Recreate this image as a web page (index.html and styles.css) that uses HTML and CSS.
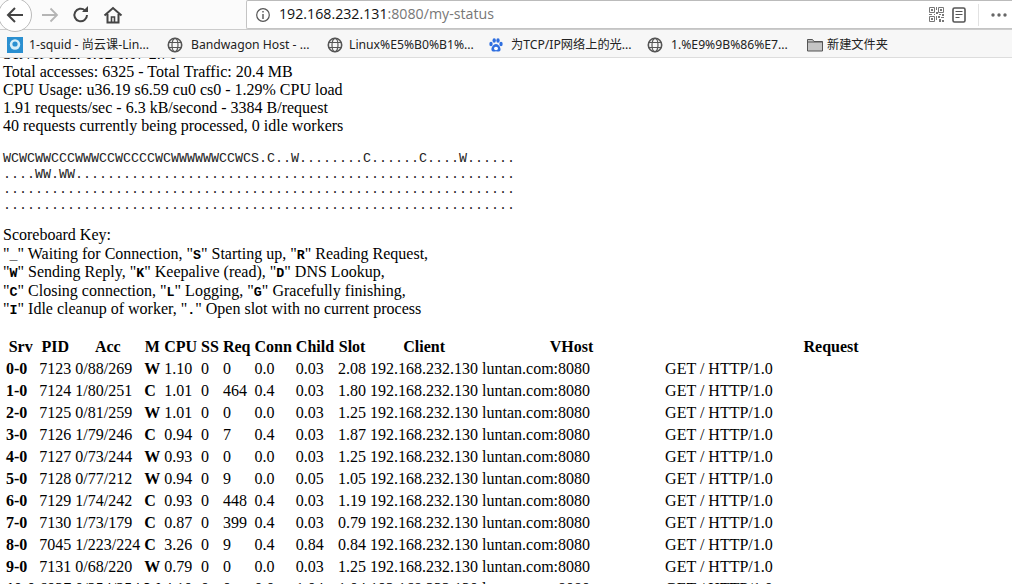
FILE: index.html
```html
<!DOCTYPE html>
<html lang="en">
<head>
<meta charset="utf-8">
<title>Apache Status</title>
<link rel="stylesheet" href="styles.css">
</head>
<body>
<header class="toolbar">
  <div class="nav">
    <span class="back"><svg width="24" height="24" viewBox="0 0 24 24"><path d="M20 12H6M12 5l-7 7 7 7" fill="none" stroke="#444" stroke-width="2"/></svg></span>
    <svg class="fwd" width="20" height="20" viewBox="0 0 20 20"><path d="M2 10h15M10.500 3.500l6.500 6.500-6.500 6.500" fill="none" stroke="#b5b5b5" stroke-width="1.800"/></svg>
    <svg class="reload" width="20" height="20" viewBox="0 0 20 20"><path d="M16 10a6.300 6.300 0 1 1-2-4.600" fill="none" stroke="#444" stroke-width="2"/><path d="M11 7h6V1z" fill="#444"/></svg>
    <svg class="home" width="20" height="20" viewBox="0 0 20 20"><path d="M1.500 10.500L10 3l8.500 7.500M4.500 9v8.500h11V9" fill="none" stroke="#444" stroke-width="2"/><path d="M8.500 17v-5h3v5" fill="none" stroke="#444" stroke-width="1.600"/></svg>
  </div>
  <div class="urlbar">
    <svg class="info" width="16" height="16" viewBox="0 0 16 16"><circle cx="8" cy="8" r="6.300" fill="none" stroke="#555" stroke-width="1.200"/><path d="M8 7v5M8 4v1.600" stroke="#555" stroke-width="1.400"/></svg>
    <span class="url"><span class="host">192.168.232.131</span>:8080/my-status</span>
    <svg class="qr" width="15" height="15" viewBox="0 0 15 15"><path d="M0.500 0.500h5v5h-5zM9.500 0.500h5v5h-5zM0.500 9.500h5v5h-5z" fill="none" stroke="#777"/><path d="M2 2h2v2H2zM11 2h2v2h-2zM2 11h2v2H2zM7 0h1v3H7zM7 5h2v2H7zM0 7h3v1H0zM5 7h1v1H5zM10 7h2v1h-2zM13 7h2v2h-2zM9 9h2v2H9zM12 10h3v1h-3zM7 9h1v4H7zM10 12h2v3h-2zM13 13h2v2h-2z" fill="#777"/></svg>
    <svg class="doc" width="14" height="16" viewBox="0 0 14 16"><rect x="1" y="1" width="12" height="14" rx="1.500" fill="none" stroke="#555" stroke-width="1.600"/><path d="M3.500 4.500h7M3.500 7.500h7M3.500 10.500h4" stroke="#555"/></svg>
    <span class="sep"></span>
    <svg class="more" width="16" height="4" viewBox="0 0 16 4"><circle cx="2" cy="2" r="1.700" fill="#666"/><circle cx="8" cy="2" r="1.700" fill="#666"/><circle cx="14" cy="2" r="1.700" fill="#666"/></svg>
  </div>
</header>
<nav class="bookmarks">
  <span class="bm bm-squid"><svg width="16" height="16" viewBox="0 0 16 16"><rect width="16" height="16" fill="#2a8fd0"/><circle cx="8" cy="7.500" r="5.200" fill="#d8eef8"/><circle cx="8" cy="7" r="2.600" fill="#2a8fd0"/></svg>1-squid - 尚云课-Lin...</span>
  <span class="bm bm-band"><svg class="globe" width="16" height="16" viewBox="0 0 16 16"><circle cx="8" cy="8" r="6.700" fill="none" stroke="#555" stroke-width="1.600"/><ellipse cx="8" cy="8" rx="3" ry="6.700" fill="none" stroke="#555" stroke-width="1.200"/><path d="M1.500 5.500h13M1.500 10.500h13" stroke="#555" stroke-width="1.200"/></svg>Bandwagon Host - ...</span>
  <span class="bm bm-linux"><svg class="globe" width="16" height="16" viewBox="0 0 16 16"><circle cx="8" cy="8" r="6.700" fill="none" stroke="#555" stroke-width="1.600"/><ellipse cx="8" cy="8" rx="3" ry="6.700" fill="none" stroke="#555" stroke-width="1.200"/><path d="M1.500 5.500h13M1.500 10.500h13" stroke="#555" stroke-width="1.200"/></svg>Linux%E5%B0%B1%...</span>
  <span class="bm bm-tcp"><svg width="16" height="16" viewBox="0 0 16 16"><g fill="#2f6fe0"><ellipse cx="3" cy="7" rx="1.700" ry="2.200"/><ellipse cx="6.200" cy="3.500" rx="1.700" ry="2.300"/><ellipse cx="10" cy="3.500" rx="1.700" ry="2.300"/><ellipse cx="13" cy="7" rx="1.700" ry="2.200"/><path d="M8 7c-2.500 0-5 3.500-4.500 6 .4 2 3 1.500 4.500 1.200 1.500.3 4.100.8 4.500-1.200.5-2.500-2-6-4.500-6z"/></g><ellipse cx="8" cy="11.500" rx="2" ry="1.800" fill="#fff"/></svg>为TCP/IP网络上的光...</span>
  <span class="bm bm-one"><svg class="globe" width="16" height="16" viewBox="0 0 16 16"><circle cx="8" cy="8" r="6.700" fill="none" stroke="#555" stroke-width="1.600"/><ellipse cx="8" cy="8" rx="3" ry="6.700" fill="none" stroke="#555" stroke-width="1.200"/><path d="M1.500 5.500h13M1.500 10.500h13" stroke="#555" stroke-width="1.200"/></svg>1.%E9%9B%86%E7...</span>
  <span class="bm bm-folder"><svg width="16" height="14" viewBox="0 0 16 14"><path d="M.5 13V1.500h5l1.500 2h8.500V13z" fill="#c4c4c4" stroke="#555"/><path d="M.5 4h15" stroke="#555"/></svg>新建文件夹</span>
</nav>
<main class="viewport">
  <div class="page">
    <div class="lines">Server load: 0.02 0.07 2.76</div>
    <div class="lines">Total accesses: 6325 - Total Traffic: 20.4 MB</div>
    <div class="lines">CPU Usage: u36.19 s6.59 cu0 cs0 - 1.29% CPU load</div>
    <div class="lines">1.91 requests/sec - 6.3 kB/second - 3384 B/request</div>
    <div class="lines">40 requests currently being processed, 0 idle workers</div>
    <pre class="score">WCWCWWCCCWWWCCWCCCCWCWWWWWWCCWCS.C..W........C......C....W......
....WW.WW.......................................................
................................................................
................................................................</pre>
    <p class="key">Scoreboard Key:<br>
"<b><code>_</code></b>" Waiting for Connection, "<b><code>S</code></b>" Starting up, "<b><code>R</code></b>" Reading Request,<br>
"<b><code>W</code></b>" Sending Reply, "<b><code>K</code></b>" Keepalive (read), "<b><code>D</code></b>" DNS Lookup,<br>
"<b><code>C</code></b>" Closing connection, "<b><code>L</code></b>" Logging, "<b><code>G</code></b>" Gracefully finishing,<br>
"<b><code>I</code></b>" Idle cleanup of worker, "<b><code>.</code></b>" Open slot with no current process</p>
    <table class="workers">
      <tr><th class="c-srv">Srv</th><th>PID</th><th class="c-acc">Acc</th><th>M</th><th>CPU</th><th class="c-ss">SS</th><th class="c-req">Req</th><th>Conn</th><th>Child</th><th>Slot</th><th>Client</th><th class="c-vhost">VHost</th><th class="c-request">Request</th></tr>
      <tr><td><b>0-0</b></td><td>7123</td><td>0/88/269</td><td><b>W</b></td><td>1.10</td><td>0</td><td>0</td><td>0.0</td><td>0.03</td><td>2.08</td><td>192.168.232.130</td><td>luntan.com:8080</td><td>GET / HTTP/1.0</td></tr>
      <tr><td><b>1-0</b></td><td>7124</td><td>1/80/251</td><td><b>C</b></td><td>1.01</td><td>0</td><td>464</td><td>0.4</td><td>0.03</td><td>1.80</td><td>192.168.232.130</td><td>luntan.com:8080</td><td>GET / HTTP/1.0</td></tr>
      <tr><td><b>2-0</b></td><td>7125</td><td>0/81/259</td><td><b>W</b></td><td>1.01</td><td>0</td><td>0</td><td>0.0</td><td>0.03</td><td>1.25</td><td>192.168.232.130</td><td>luntan.com:8080</td><td>GET / HTTP/1.0</td></tr>
      <tr><td><b>3-0</b></td><td>7126</td><td>1/79/246</td><td><b>C</b></td><td>0.94</td><td>0</td><td>7</td><td>0.4</td><td>0.03</td><td>1.87</td><td>192.168.232.130</td><td>luntan.com:8080</td><td>GET / HTTP/1.0</td></tr>
      <tr><td><b>4-0</b></td><td>7127</td><td>0/73/244</td><td><b>W</b></td><td>0.93</td><td>0</td><td>0</td><td>0.0</td><td>0.03</td><td>1.25</td><td>192.168.232.130</td><td>luntan.com:8080</td><td>GET / HTTP/1.0</td></tr>
      <tr><td><b>5-0</b></td><td>7128</td><td>0/77/212</td><td><b>W</b></td><td>0.94</td><td>0</td><td>9</td><td>0.0</td><td>0.05</td><td>1.05</td><td>192.168.232.130</td><td>luntan.com:8080</td><td>GET / HTTP/1.0</td></tr>
      <tr><td><b>6-0</b></td><td>7129</td><td>1/74/242</td><td><b>C</b></td><td>0.93</td><td>0</td><td>448</td><td>0.4</td><td>0.03</td><td>1.19</td><td>192.168.232.130</td><td>luntan.com:8080</td><td>GET / HTTP/1.0</td></tr>
      <tr><td><b>7-0</b></td><td>7130</td><td>1/73/179</td><td><b>C</b></td><td>0.87</td><td>0</td><td>399</td><td>0.4</td><td>0.03</td><td>0.79</td><td>192.168.232.130</td><td>luntan.com:8080</td><td>GET / HTTP/1.0</td></tr>
      <tr><td><b>8-0</b></td><td>7045</td><td>1/223/224</td><td><b>C</b></td><td>3.26</td><td>0</td><td>9</td><td>0.4</td><td>0.84</td><td>0.84</td><td>192.168.232.130</td><td>luntan.com:8080</td><td>GET / HTTP/1.0</td></tr>
      <tr><td><b>9-0</b></td><td>7131</td><td>0/68/220</td><td><b>W</b></td><td>0.79</td><td>0</td><td>0</td><td>0.0</td><td>0.03</td><td>1.25</td><td>192.168.232.130</td><td>luntan.com:8080</td><td>GET / HTTP/1.0</td></tr>
      <tr><td><b>10-0</b></td><td>6937</td><td>0/254/254</td><td><b>W</b></td><td>4.10</td><td>0</td><td>0</td><td>0.0</td><td>1.04</td><td>1.04</td><td>192.168.232.130</td><td>luntan.com:8080</td><td>GET / HTTP/1.0</td></tr>
    </table>
  </div>
</main>
</body>
</html>
```
FILE: styles.css
```css
html, body { margin: 0; height: 100%; overflow: hidden; background: #fff; }
body { display: flex; flex-direction: column; height: 584px; color: #000; }
.toolbar { display: flex; align-items: center; height: 29px; background: #fbfbfb; box-sizing: border-box; flex: none; }
.nav { display: flex; align-items: center; width: 246px; flex: none; height: 29px; }
.back { display: flex; align-items: center; justify-content: center; flex: none; width: 34px; height: 34px; margin-left: -2px; margin-top: 1px; border: 1px solid #bbb; border-radius: 50%; background: #fff; box-sizing: border-box; position: relative; z-index: 1; }
.fwd { margin-left: 8px; }
.reload { margin-left: 11px; }
.home { margin-left: 12px; }
.urlbar { flex: 1; display: flex; align-items: center; height: 29px; background: #fff; border: 1px solid #c4c4c4; border-right: 0; border-top-color: #bbb; border-radius: 2px 0 0 2px; box-sizing: border-box; }
.info { margin-left: 8px; flex: none; }
.url { margin-left: 8px; flex: 1; font: 14.2px/1 "Open Sans", "Noto Sans", sans-serif; color: #777; white-space: nowrap; }
.host { color: #111; }
.qr { flex: none; }
.doc { flex: none; margin-left: 8px; }
.sep { width: 1px; height: 22px; background: #e2e2e2; margin-left: 12px; flex: none; }
.more { flex: none; margin: 0 5px 0 12px; }
.bookmarks { display: flex; align-items: center; height: 29px; padding-top: 3px; background: #f7f7f7; border-top: 1px solid #ccc; border-bottom: 1px solid #ddd; box-sizing: border-box; font: 12.2px/1 "Noto Sans", "Noto Sans CJK SC", sans-serif; color: #222; flex: none; }
.bm { display: flex; align-items: center; gap: 6px; white-space: nowrap; flex: none; }
.bm-squid { margin-left: 7px; width: 160px; }
.bm-band { width: 160px; gap: 8px; }
.bm-linux { width: 161px; }
.bm-tcp { width: 159px; gap: 7px; }
.bm-one { width: 160px; gap: 8px; }
.bm-folder { gap: 4px; }
.bm svg { flex: none; }
.viewport { flex: 1; overflow: hidden; min-height: 0; }
.page { margin: -13px 0 0 3px; font: 16px/18px "Liberation Serif", "Times New Roman", serif; }
.lines { height: 18px; white-space: nowrap; }
.score { margin: 16px 0 13px; font: 13.333px/15.6px "Liberation Mono", "Courier New", monospace; color: #222; }
.key { margin: 13px 0 17px; white-space: nowrap; line-height: 18.4px; }
code { font: 700 13.333px/1 "Liberation Mono", "Courier New", monospace; }
.workers { border-collapse: separate; border-spacing: 2px; font: inherit; }
.workers th, .workers td { padding: 1px; white-space: nowrap; text-align: left; font-size: 16px; line-height: 18px; }
.workers th { text-align: center; font-weight: 700; }
.c-vhost { min-width: 179px; width: 179px; }
.c-request { min-width: 332px; width: 332px; }
```
